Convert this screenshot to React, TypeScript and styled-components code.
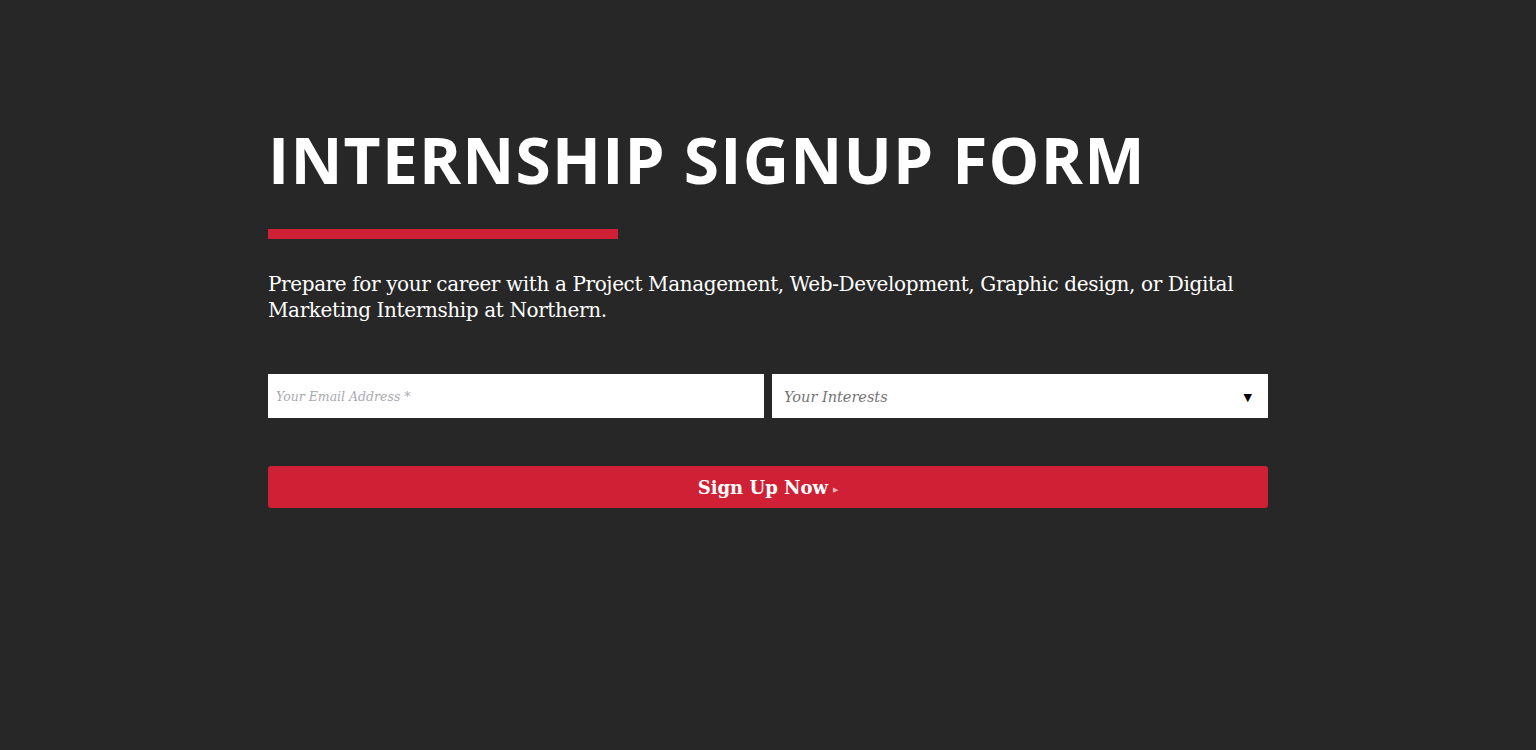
import React from "react";
import styled, { createGlobalStyle } from "styled-components";

const Global = createGlobalStyle`
  html, body { margin: 0; padding: 0; background: #272727; }
  body { font-family: "DejaVu Serif", "Liberation Serif", serif; }
  * { box-sizing: border-box; }
`;

const Page = styled.main`
  min-height: 750px;
  background: #272727;
  display: flex;
  justify-content: center;
  padding-top: 124px;
`;

const Container = styled.div`
  width: 1000px;
  display: flex;
  flex-direction: column;
`;

const Title = styled.h1`
  margin: 0;
  font-family: "Open Sans", "DejaVu Sans", sans-serif;
  font-weight: 700;
  font-size: 64px;
  line-height: 72px;
  color: #ffffff;
  letter-spacing: 1.2px;
`;

const Rule = styled.div`
  width: 350px;
  height: 10px;
  background: #cf2035;
  margin-top: 33px;
`;

const Lead = styled.p`
  margin: 32px 0 0;
  font-family: "DejaVu Serif", serif;
  font-size: 20px;
  line-height: 26px;
  color: #ffffff;
  letter-spacing: -0.38px;
`;

const Row = styled.div`
  display: grid;
  grid-template-columns: 1fr 1fr;
  gap: 8px;
  margin-top: 51px;
`;

const Input = styled.input`
  height: 44px;
  border: none;
  outline: none;
  padding: 0 8px;
  background: #fff;
  font-family: "DejaVu Serif", serif;
  font-style: italic;
  font-size: 12.5px;
  color: #333;
  &::placeholder { color: #a9a9b0; }
`;

const SelectBox = styled.div`
  height: 44px;
  background: #fff;
  display: flex;
  align-items: center;
  justify-content: space-between;
  padding: 2px 16px 0 12px;
`;

const SelectText = styled.span`
  font-family: "DejaVu Serif", serif;
  font-style: italic;
  font-size: 14.5px;
  color: #757575;
`;

const Caret = styled.span`
  font-family: "DejaVu Sans", sans-serif;
  font-size: 11px;
  color: #000;
`;

const Button = styled.button`
  margin-top: 48px;
  height: 42px;
  width: 100%;
  border: none;
  border-radius: 3px;
  background: #cf2035;
  color: #fff;
  font-family: "DejaVu Serif", serif;
  font-weight: 700;
  font-size: 18px;
  display: flex;
  align-items: center;
  justify-content: center;
  gap: 5px;
  padding-top: 1px;
  cursor: pointer;
`;

const Arrow = styled.span`
  font-family: "DejaVu Sans", sans-serif;
  font-size: 7px;
  color: #e8b8bf;
  margin-top: 5px;
`;

export default function App() {
  return (
    <>
      <Global />
      <Page>
        <Container>
          <Title>INTERNSHIP SIGNUP FORM</Title>
          <Rule />
          <Lead>
            Prepare for your career with a Project Management, Web-Development, Graphic design, or Digital Marketing Internship at Northern.
          </Lead>
          <Row>
            <Input placeholder="Your Email Address *" />
            <SelectBox>
              <SelectText>Your Interests</SelectText>
              <Caret>▼</Caret>
            </SelectBox>
          </Row>
          <Button>
            Sign Up Now<Arrow>▶</Arrow>
          </Button>
        </Container>
      </Page>
    </>
  );
}
